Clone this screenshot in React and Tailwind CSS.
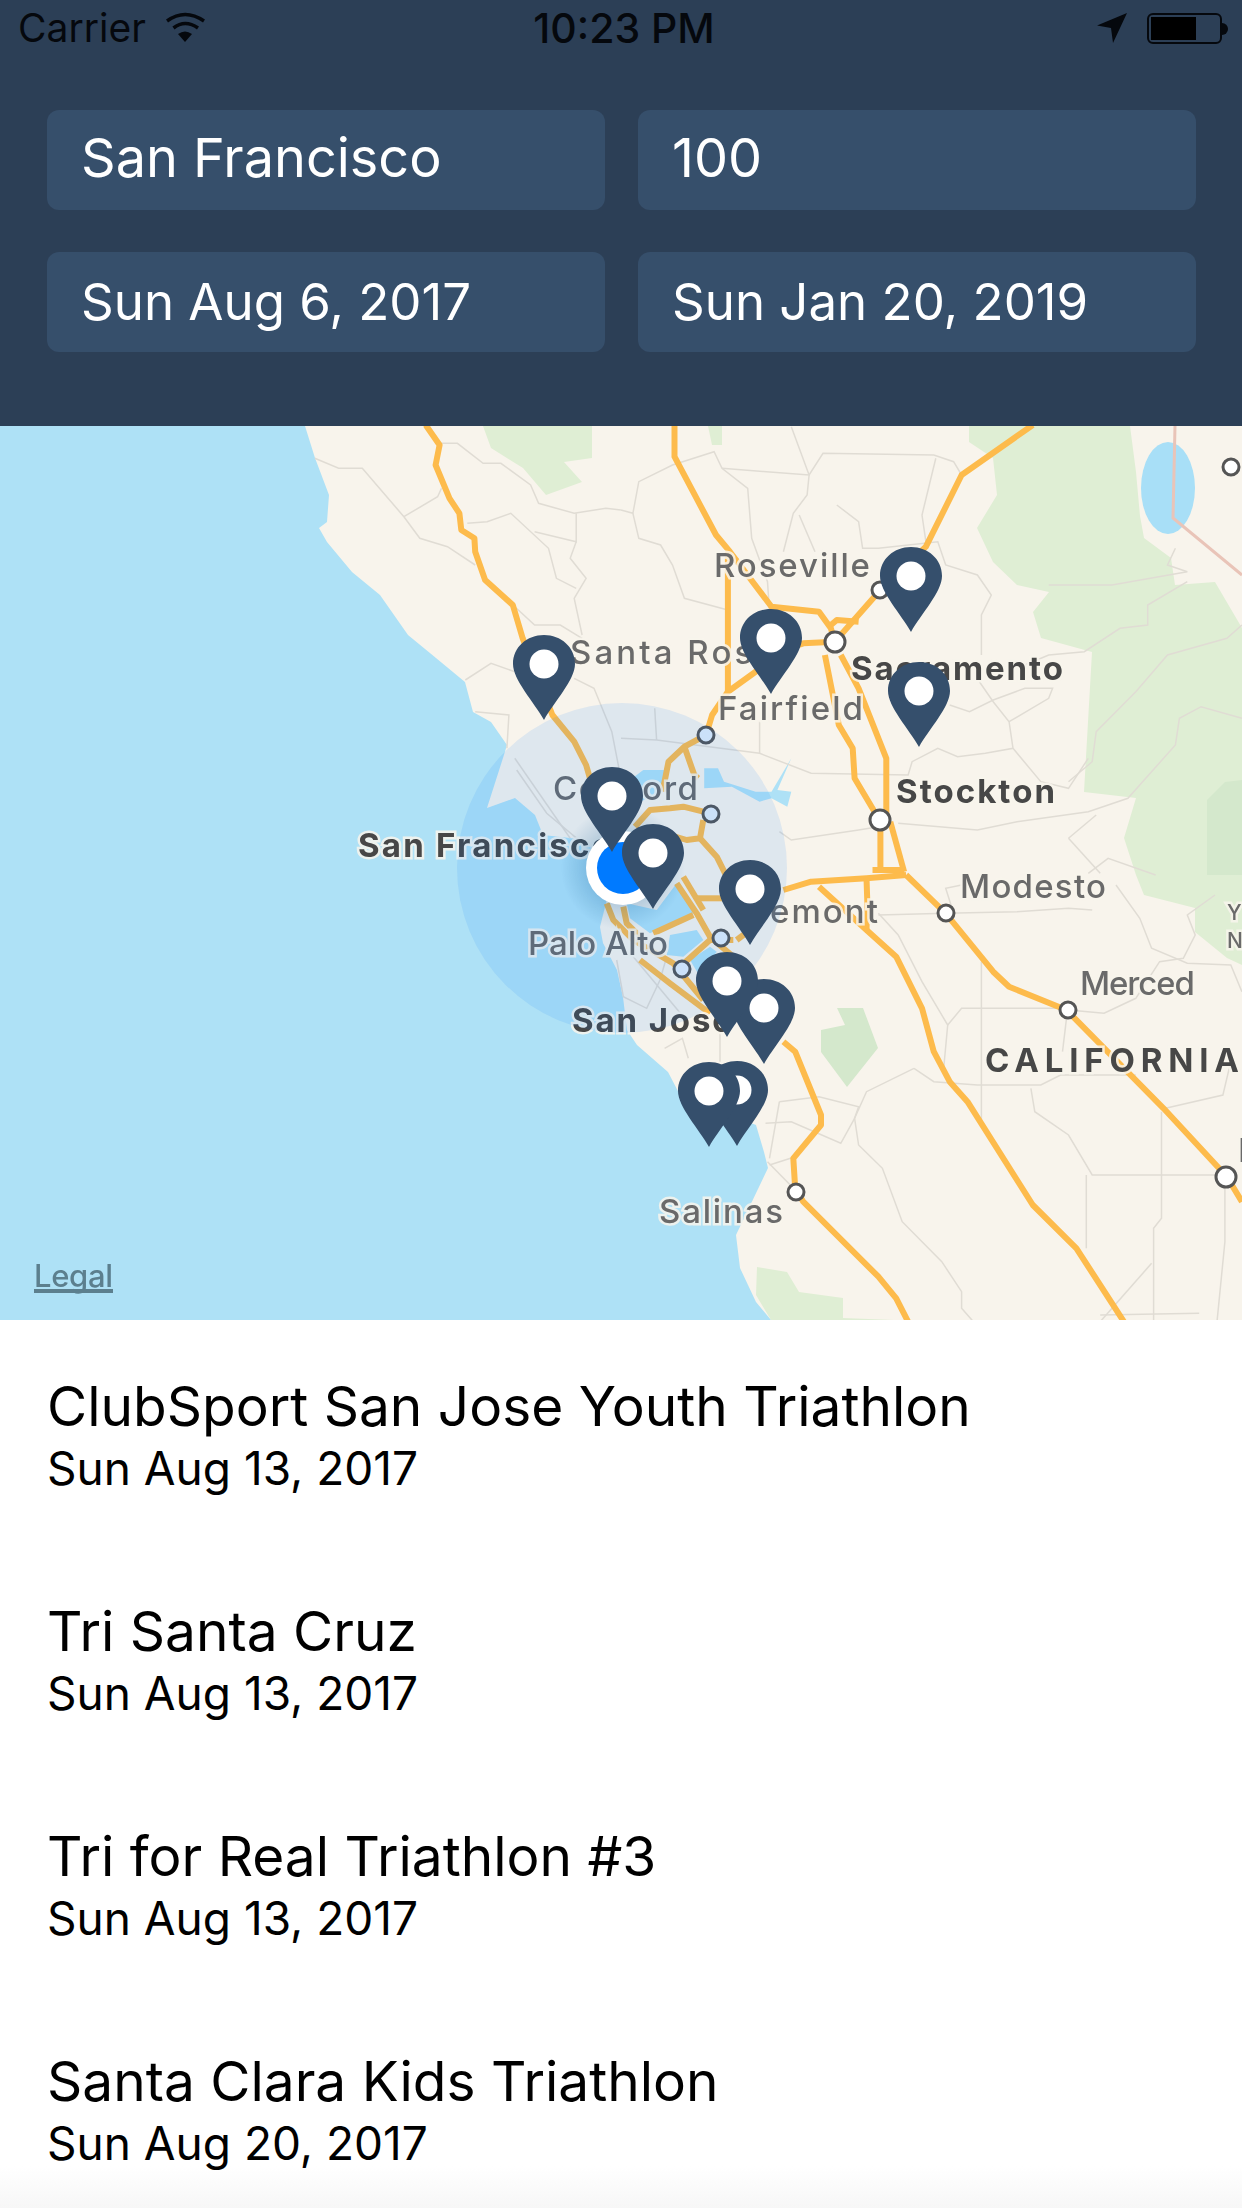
import React from "react";

// the zoom crops each have their own scale, so coordinates below carry the crop they were read from
const frames = {
  a: (x, y) => [x * 0.396, 425 + y / 3],
  b: (x, y) => [621 + x * 0.396, 425 + y / 3],
  c: (x, y) => [x * 0.396, 875 + y / 3],
  d: (x, y) => [621 + x * 0.396, 875 + y / 3],
  e: (x, y) => [470 + x / 3, 770 + y / 3],
};

const pts = (frame, list) => {
  const out = [];
  for (let i = 0; i < list.length; i += 2) {
    const [x, y] = frames[frame](list[i], list[i + 1]);
    out.push(`${x.toFixed(1)},${y.toFixed(1)}`);
  }
  return out.join(" ");
};

const land =
  "305,426 315,458 329,495 327,522 319,528 327,542 352,572 380,595 408,635 436,658 465,682 473,712 491,722 507,745 503,758 487,808 515,798 535,815 543,835 570,838 583,840 610,860 606,903 600,927 603,943 617,970 623,997 627,1030 637,1045 668,1072 680,1095 756,1125 764,1152 768,1168 736,1235 740,1268 756,1302 771,1320 1242,1320 1242,426";

const greens = [
  "969,426 969,442 993,458 997,495 977,528 993,562 1017,585 1049,592 1033,612 1041,638 1092,652 1084,792 1136,798 1124,838 1136,875 1144,895 1195,908 1195,932 1227,958 1242,965 1242,628 1215,582 1175,585 1171,558 1144,538 1140,516 1136,472 1130,426",
  "483,426 592,426 592,458 564,462 582,482 546,495 523,468 491,448",
  "708,426 722,426 722,445 712,445",
  "757,1267 787,1272 799,1292 843,1298 843,1318 894,1320 771,1320 756,1295",
];

const darkGreens = [
  "837,1008 863,1008 878,1048 847,1087 821,1052 821,1030 845,1025",
  "1207,800 1225,782 1242,780 1242,875 1207,875",
];

const bays = [
  pts("b", [210, 1030, 245, 1030, 260, 1070, 340, 1100, 380, 1100, 430, 1000, 395, 1095, 430, 1100, 420, 1145, 380, 1120, 350, 1130, 280, 1085, 210, 1090]),
  pts("e", [470, 400, 480, 445, 540, 490, 670, 430, 620, 340, 560, 420]),
  pts("e", [600, 495, 680, 480, 700, 510, 640, 560, 590, 555]),
  pts("e", [660, 570, 720, 530, 740, 545, 690, 620]),
  pts("e", [480, 30, 520, 0, 590, 0, 590, 60, 500, 100]),
];

const thinRoads = [
  ["a", [795, 100, 855, 130, 915, 130, 1020, 275, 1060, 340, 1130, 365, 1200, 420]],
  ["a", [1020, 275, 1105, 215, 1115, 190]],
  ["a", [1110, 55, 1155, 55, 1220, 115, 1265, 115, 1340, 180, 1360, 235, 1450, 265, 1530, 250, 1568, 255]],
  ["a", [1180, 295, 1230, 290, 1290, 265, 1385, 370, 1405, 460, 1455, 490]],
  ["a", [1350, 320, 1455, 350, 1455, 265]],
  ["a", [1455, 350, 1440, 400, 1480, 460, 1450, 520, 1470, 630]],
  ["a", [1300, 545, 1350, 600, 1415, 600, 1470, 640]],
  ["a", [1175, 765, 1240, 715, 1300, 740]],
  ["a", [1450, 760, 1500, 790, 1545, 920, 1568, 1060]],
  ["a", [1200, 860, 1285, 870, 1280, 970]],
  ["a", [1300, 1000, 1440, 1240]],
  ["b", [0, 255, 30, 265, 45, 170, 130, 120, 235, 80, 255, 130, 320, 190, 330, 340, 370, 470, 375, 560]],
  ["b", [255, 130, 475, 150, 510, 85, 790, 90, 840, 110, 860, 150]],
  ["b", [430, 5, 475, 150, 470, 210, 435, 265, 410, 380]],
  ["b", [450, 270, 490, 380]],
  ["b", [30, 265, 45, 340, 100, 360, 130, 420, 160, 520, 270, 555]],
  ["b", [545, 240, 600, 290, 610, 370, 650, 370, 800, 350, 820, 420, 900, 450, 935, 510, 910, 570, 910, 690]],
  ["b", [795, 100, 760, 270, 770, 350]],
  ["b", [905, 770, 940, 830, 980, 890, 990, 970, 920, 985, 850, 995, 800, 970, 735, 1010, 725, 1050, 480, 1045, 350, 985, 90, 945, 0, 940]],
  ["b", [830, 840, 880, 860, 940, 825, 1020, 790, 1090, 790, 1080, 820, 980, 890]],
  ["b", [990, 970, 1060, 1070, 1130, 1090, 1180, 1000]],
  ["b", [1080, 480, 1240, 480, 1430, 440, 1380, 420, 1400, 370]],
  ["b", [1430, 470, 1330, 540, 1330, 600, 1260, 610, 1170, 680, 1080, 690, 1020, 720]],
  ["b", [1568, 600, 1530, 640, 1380, 690, 1300, 800, 1200, 920, 1190, 1010, 1130, 1070]],
  ["b", [1568, 880, 1465, 845, 1410, 880, 1400, 960, 1280, 1120, 1180, 1160, 1000, 1190, 900, 1215, 700, 1195]],
  ["b", [400, 1220, 430, 1245, 600, 1215, 650, 1205]],
  ["b", [1130, 1240, 1200, 1170]],
  ["b", [1130, 1240, 1210, 1345]],
  ["b", [1350, 1350, 1230, 1300, 1180, 1345]],
  ["b", [350, 890, 350, 985]],
  ["b", [85, 850, 90, 945]],
  ["d", [650, 115, 700, 180, 760, 320, 825, 450, 815, 580]],
  ["d", [650, 120, 820, 115, 1000, 110, 1130, 100, 1190, 105]],
  ["d", [840, 115, 820, 40, 860, 30]],
  ["d", [1250, 30, 1310, 130, 1340, 220, 1430, 265, 1540, 270, 1568, 350]],
  ["d", [1130, 405, 1220, 415, 1300, 370, 1360, 260, 1420, 250, 1450, 180, 1430, 120, 1500, 60]],
  ["d", [825, 450, 860, 400, 1130, 400]],
  ["d", [910, 260, 910, 740]],
  ["d", [1125, 430, 1115, 530]],
  ["d", [740, 580, 620, 650, 590, 730, 600, 810, 660, 880, 710, 1040, 810, 1160, 860, 1250, 860, 1300, 890, 1340]],
  ["d", [740, 580, 790, 620, 900, 630, 1060, 630, 1110, 600, 1300, 600]],
  ["d", [1035, 640, 1045, 710, 1130, 780, 1190, 900, 1525, 900]],
  ["d", [1375, 700, 1520, 660, 1540, 560]],
  ["d", [1365, 710, 1365, 1030, 1345, 1060, 1345, 1340]],
  ["d", [1175, 900, 1175, 1120]],
  ["d", [1525, 920, 1525, 1100, 1505, 1340]],
  ["d", [400, 680, 500, 665, 600, 695, 590, 730]],
  ["d", [400, 680, 375, 850]],
  ["d", [365, 745, 430, 740, 555, 805, 590, 730]],
  ["d", [370, 860, 460, 970]],
  ["d", [375, 870, 440, 845]],
  ["d", [1340, 1165, 1210, 1340]],
  ["d", [1210, 1320, 1460, 1315]],
  ["d", [250, 470, 250, 560]],
  ["d", [110, 520, 155, 490, 170, 550]],
  ["e", [140, 0, 230, 130, 350, 230]],
  ["e", [440, 570, 460, 680, 530, 715, 570, 630, 590, 560]],
  ["e", [490, 560, 640, 740]],
];

const highways = [
  ["a", [1075, 0, 1110, 60, 1100, 120, 1135, 220, 1160, 265, 1165, 315, 1198, 340, 1200, 380, 1225, 465, 1295, 540, 1320, 640, 1395, 870, 1450, 950, 1480, 1020, 1490, 1060, 1520, 1180]],
  ["b", [135, 0, 135, 95, 240, 330, 275, 380, 380, 545, 500, 560, 530, 610, 540, 650]],
  ["b", [270, 380, 270, 800, 340, 740, 400, 680, 460, 655, 540, 650]],
  ["b", [270, 800, 230, 870, 215, 930]],
  ["b", [215, 930, 160, 965, 120, 1010, 105, 1100]],
  ["b", [160, 965, 185, 1050, 195, 1060]],
  ["b", [540, 650, 655, 495, 770, 365, 860, 150, 1040, 0]],
  ["b", [530, 600, 545, 585, 600, 590]],
  ["b", [515, 690, 550, 900, 585, 970, 590, 1060, 650, 1180]],
  ["b", [555, 690, 600, 790, 670, 1000, 670, 1180]],
  ["b", [655, 1180, 655, 1340]],
  ["b", [680, 1190, 715, 1340]],
  ["b", [635, 1335, 715, 1335]],
  ["d", [410, 45, 480, 20, 620, 10, 720, 0]],
  ["d", [720, 0, 820, 115, 940, 290, 980, 335, 1125, 405, 1370, 700, 1530, 905, 1568, 980]],
  ["d", [500, 35, 620, 165, 695, 245, 760, 400, 790, 530, 830, 620, 875, 680, 1040, 990, 1150, 1120, 1270, 1340]],
  ["d", [620, 10, 622, 80, 620, 165]],
  ["d", [410, 500, 440, 530, 505, 720, 505, 750, 435, 850, 440, 940, 460, 980, 650, 1205, 695, 1270, 725, 1340]],
  ["e", [495, 170, 540, 120, 600, 115, 640, 110, 700, 125]],
  ["e", [700, 150, 690, 205, 650, 210, 600, 195]],
  ["e", [690, 205, 740, 260, 770, 320]],
  ["e", [620, 340, 680, 430, 720, 500, 790, 560]],
  ["e", [640, 320, 700, 420]],
  ["e", [680, 385, 760, 385]],
  ["e", [550, 490, 670, 435]],
  ["e", [410, 400, 430, 450, 490, 510, 610, 580, 700, 690]],
  ["e", [460, 410, 470, 460, 510, 500]],
  ["e", [510, 570, 600, 640, 720, 730]],
  ["e", [720, 510, 790, 510]],
  ["e", [630, 590, 720, 510]],
  ["e", [800, 510, 840, 480]],
];

const nodes = [
  [711, 814, 8, "#e2eef9"],
  [721, 938, 8, "#e2eef9"],
  [682, 969, 8, "#e2eef9"],
  [706, 735, 8, "#e2eef9"],
  [835, 642, 10, "#ffffff"],
  [880, 590, 8, "#ffffff"],
  [880, 820, 10, "#ffffff"],
  [1231, 467, 8, "#ffffff"],
  [946, 913, 8, "#ffffff"],
  [1068, 1010, 8, "#ffffff"],
  [1226, 1177, 10, "#ffffff"],
  [796, 1192, 8, "#ffffff"],
];

const labels = [
  { text: "Roseville", x: 714, y: 577, w: 156 },
  { text: "Santa Rosa", x: 570, y: 664, w: 204 },
  { text: "Sacramento", x: 851, y: 680, w: 212, bold: true },
  { text: "Fairfield", x: 718, y: 720, w: 145 },
  { text: "Stockton", x: 896, y: 803, w: 159, bold: true },
  { text: "Concord", x: 553, y: 800, w: 145 },
  { text: "San Francisco", x: 358, y: 857, w: 254, bold: true },
  { text: "Palo Alto", x: 528, y: 955, w: 140 },
  { text: "San Jose", x: 572, y: 1032, w: 160, bold: true },
  { text: "Fremont", x: 735, y: 923, w: 143 },
  { text: "Modesto", x: 960, y: 898, w: 146 },
  { text: "Merced", x: 1080, y: 995, w: 115 },
  { text: "CALIFORNIA", x: 985, y: 1072, w: 254, bold: true },
  { text: "Salinas", x: 659, y: 1223, w: 124 },
  { text: "Y", x: 1227, y: 920, w: 14, size: 21 },
  { text: "N", x: 1227, y: 948, w: 15, size: 21 },
  { text: "F", x: 1238, y: 1162, w: 16 },
];

const pins = [
  [544, 664],
  [911, 576],
  [771, 638],
  [919, 691],
  [737, 1090],
  [709, 1091],
  [764, 1008],
  [727, 981],
  [612, 796],
  [653, 853],
  [750, 889],
];

const races = [
  { name: "ClubSport San Jose Youth Triathlon", date: "Sun Aug 13, 2017" },
  { name: "Tri Santa Cruz", date: "Sun Aug 13, 2017" },
  { name: "Tri for Real Triathlon #3", date: "Sun Aug 13, 2017" },
  { name: "Santa Clara Kids Triathlon", date: "Sun Aug 20, 2017" },
];

const StatusBar = () => (
  <div className="grid grid-cols-3 h-[50px] text-[39px] leading-[50px] text-[#05080d] pt-[3px]">
    <div className="flex items-start pl-[18px] gap-[20px]">
      <span>Carrier</span>
      <svg viewBox="0 0 40 32" className="w-[40px] h-[32px] mt-[8px]">
        <path d="M1 10Q19 -3 38 10" fill="none" stroke="#05080d" strokeWidth="3.5" />
        <path d="M7.5 17Q19 8 32 17" fill="none" stroke="#05080d" strokeWidth="3.5" />
        <path d="M12 23Q19 18 26 23L19 31Z" fill="#05080d" />
      </svg>
    </div>
    <div className="text-center text-[41px] font-medium pl-[6px]">10:23 PM</div>
    <div className="flex justify-end items-start pr-[14px] gap-[20px] pt-[10px]">
      <svg viewBox="0 0 30 30" className="w-[30px] h-[30px]">
        <path d="M30 0L0 12.5L14 15L16 30Z" fill="#05080d" />
      </svg>
      <div className="flex items-center">
        <div className="w-[75px] h-[31px] rounded-[6px] border-2 border-[#05080d] p-[2px]">
          <div className="w-[45px] h-full bg-black" />
        </div>
        <div className="w-[6px] h-[12px] bg-[#05080d] rounded-r-[6px]" />
      </div>
    </div>
  </div>
);

const InputField = ({ children }) => (
  <div className="h-[100px] flex items-center pl-[34px] pb-[6px] rounded-[12px] bg-[#364f6b] text-white text-[54px]">
    {children}
  </div>
);

const DateField = ({ children }) => (
  <div className="h-[100px] flex items-center pl-[34px] rounded-[12px] bg-[#364f6b] text-white text-[51px]">
    {children}
  </div>
);

const MapView = () => (
  <div className="h-[894px] bg-[#aee1f6] shrink-0">
    <svg viewBox="0 426 1242 894" className="w-full h-full block blur-[0.5px]" style={{ fontFamily: "Inter, sans-serif" }}>
      <defs>
        <radialGradient id="dotShade">
          <stop offset="0.5" stopColor="#00508c" stopOpacity="0.22" />
          <stop offset="1" stopColor="#00508c" stopOpacity="0" />
        </radialGradient>
      </defs>
      <polygon points={land} fill="#f8f4ec" />
      {greens.map((p, i) => (
        <polygon key={i} points={p} fill="#dfeed4" />
      ))}
      {darkGreens.map((p, i) => (
        <polygon key={i} points={p} fill="#d4e8cc" />
      ))}
      {bays.map((p, i) => (
        <polygon key={i} points={p} fill="#aee1f6" />
      ))}
      <ellipse cx="1168" cy="488" rx="27" ry="46" fill="#a8dff7" />
      <polyline points="1175,426 1173,518 1242,575" fill="none" stroke="#e9c4b8" strokeWidth="3" />
      {thinRoads.map(([f, list], i) => (
        <polyline key={i} points={pts(f, list)} fill="none" stroke="#e0dcd4" strokeWidth="1.5" />
      ))}
      {highways.map(([f, list], i) => (
        <polyline key={i} points={pts(f, list)} fill="none" stroke="#fdbb4c" strokeWidth="6" strokeLinejoin="round" />
      ))}
      {nodes.map(([x, y, r, fill], i) => (
        <circle key={i} cx={x} cy={y} r={r} fill={fill} stroke="#555" strokeWidth="3" />
      ))}
      {labels.map((l) => (
        <text
          key={l.text}
          x={l.x}
          y={l.y}
          textLength={l.w}
          lengthAdjust="spacing"
          fontSize={l.size || 33}
          fontWeight={l.bold ? 700 : 500}
          fill={l.bold ? "#474747" : "#6a6a6a"}
          stroke="#f8f4ec"
          strokeOpacity="0.85"
          strokeWidth="5"
          paintOrder="stroke"
        >
          {l.text}
        </text>
      ))}
      <circle cx="622" cy="868" r="165" fill="#007aff" fillOpacity="0.1" />
      <circle cx="623" cy="868" r="62" fill="url(#dotShade)" />
      <circle cx="623" cy="868" r="37" fill="#ffffff" />
      <circle cx="623" cy="868" r="26" fill="#007aff" />
      {pins.map(([x, y], i) => (
        <g key={i} transform={`translate(${x} ${y})`}>
          <path
            d="M0 56C-10 38 -31 16 -31 0C-31 -17 -17 -29 0 -29C17 -29 31 -17 31 0C31 16 10 38 0 56Z"
            fill="#354f6c"
          />
          <circle r="14.5" fill="#ffffff" />
        </g>
      ))}
      <text x="34" y="1287" textLength="79" lengthAdjust="spacing" fontSize="31" fontWeight="500" fill="#5c7f8e">
        Legal
      </text>
      <rect x="34" y="1289" width="79" height="4" fill="#5c7f8e" />
    </svg>
  </div>
);

const App = () => {
  return (
    <div className="relative w-[1242px] h-[2208px] flex flex-col overflow-hidden bg-white" style={{ fontFamily: "Inter, sans-serif" }}>
      <div className="h-[426px] shrink-0 bg-[#2c3f56]">
        <StatusBar />
        <div className="grid grid-cols-2 gap-x-[33px] gap-y-[42px] pl-[47px] pr-[46px] pt-[60px]">
          <InputField>San Francisco</InputField>
          <InputField>100</InputField>
          <DateField>Sun Aug 6, 2017</DateField>
          <DateField>Sun Jan 20, 2019</DateField>
        </div>
      </div>
      <MapView />
      <div className="flex-1 relative z-10">
        {races.map((r) => (
          <div key={r.name} className="h-[225px] pl-[47px] pt-[55px] text-black">
            <div className="text-[55px] leading-[62px]">{r.name}</div>
            <div className="text-[46px] leading-[50px] mt-[6px]">{r.date}</div>
          </div>
        ))}
      </div>
      <div className="absolute bottom-0 inset-x-0 h-[42px] bg-gradient-to-b from-white to-[#f7f7f7]" />
    </div>
  );
};

export default App;
